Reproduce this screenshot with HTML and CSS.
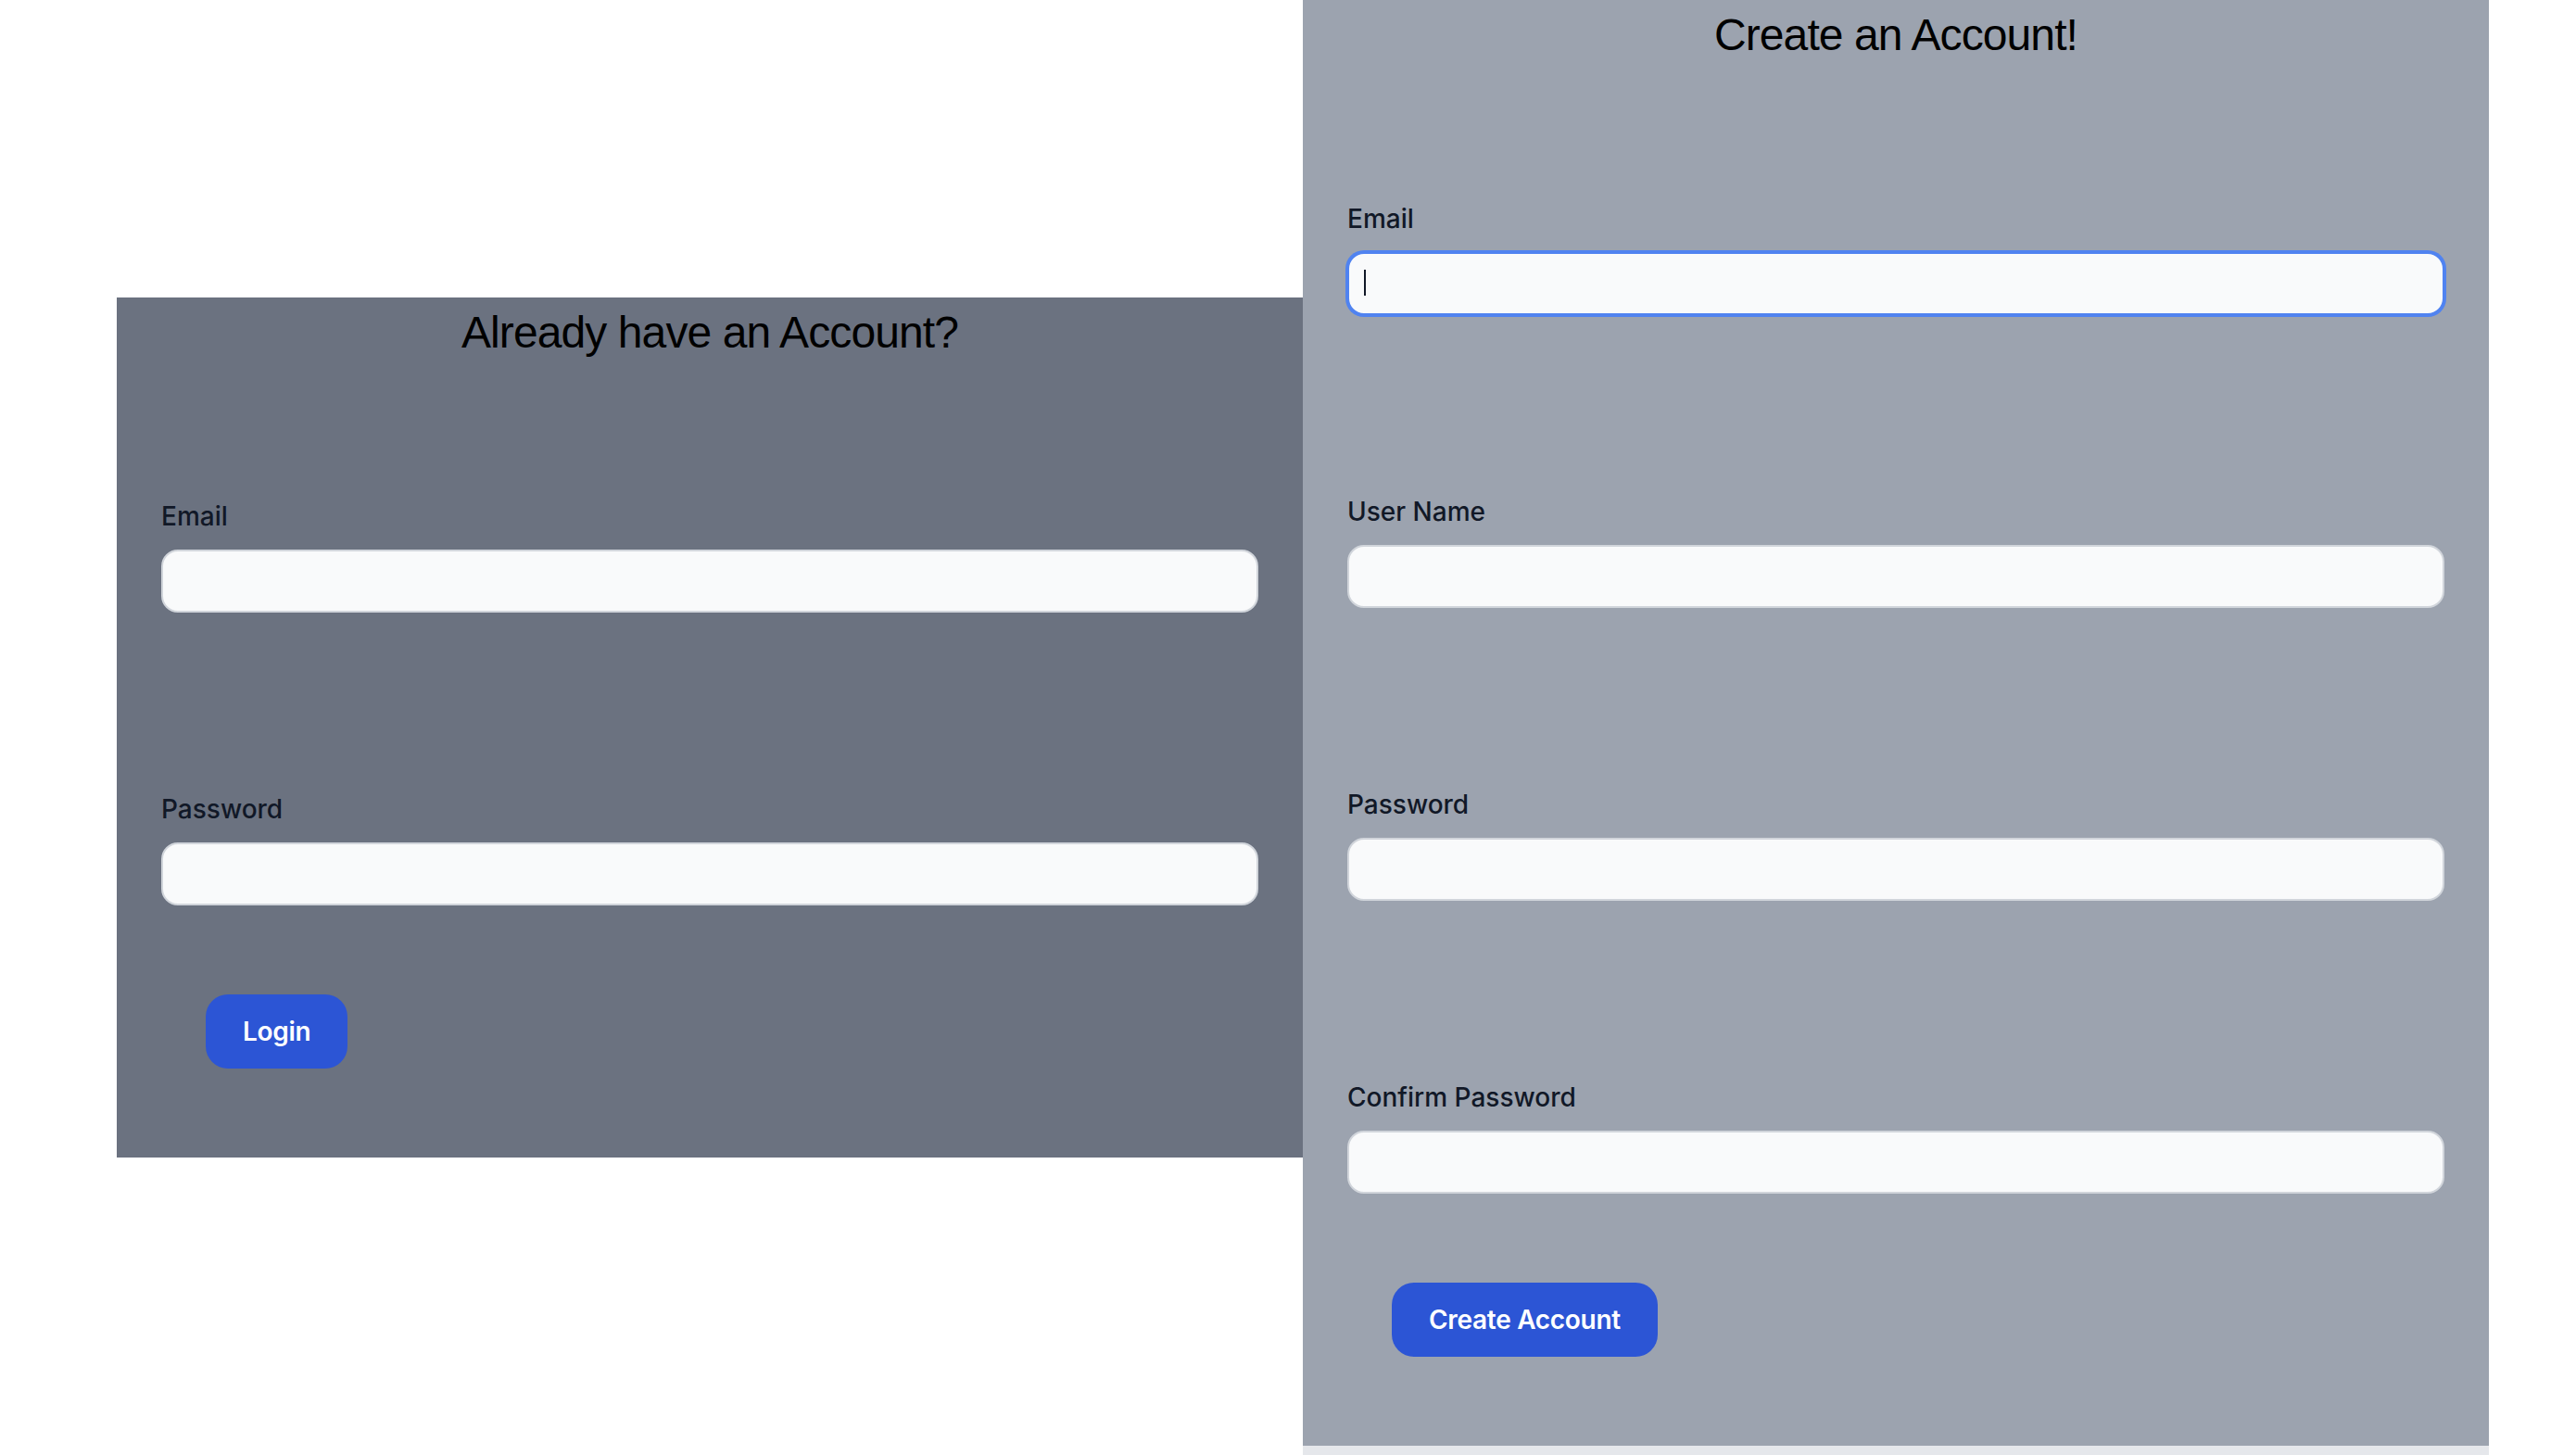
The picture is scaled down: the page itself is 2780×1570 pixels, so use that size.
FILE: index.html
```html
<!DOCTYPE html>
<html lang="en">
<head>
<meta charset="utf-8">
<title>Account</title>
<link rel="stylesheet" href="styles.css">
</head>
<body>
<main class="page">
  <section class="panel panel-login">
    <h1 class="title">Already have an Account?</h1>
    <form class="form">
      <div class="field">
        <label class="label">Email</label>
        <input class="input" type="email">
      </div>
      <div class="field">
        <label class="label">Password</label>
        <input class="input" type="password">
      </div>
      <button class="btn" type="button">Login</button>
    </form>
  </section>
  <section class="panel panel-signup">
    <h1 class="title">Create an Account!</h1>
    <form class="form">
      <div class="field">
        <label class="label">Email</label>
        <div class="input-wrap">
          <input class="input input-focus" type="email">
          <span class="caret"></span>
        </div>
      </div>
      <div class="field">
        <label class="label">User Name</label>
        <input class="input" type="text">
      </div>
      <div class="field">
        <label class="label">Password</label>
        <input class="input" type="password">
      </div>
      <div class="field">
        <label class="label">Confirm Password</label>
        <input class="input" type="password">
      </div>
      <button class="btn" type="button">Create Account</button>
    </form>
  </section>
</main>
</body>
</html>
```

FILE: styles.css
```css
* { box-sizing: border-box; }

html, body {
  margin: 0;
  padding: 0;
  background: #ffffff;
}

body {
  width: 2780px;
  height: 1570px;
  overflow: hidden;
  font-family: Inter, "Noto Sans", sans-serif;
}

.page {
  display: flex;
  align-items: center;
  height: 1570px;
  padding-left: 126px;
}

.panel {
  width: 1280px;
  padding: 0 48px;
  display: flex;
  flex-direction: column;
}

.panel-login {
  background: #6b7280;
}

.panel-signup {
  background: #9ca3af;
  align-self: flex-start;
  border-bottom: 10px solid #e5e7eb;
}

.title {
  margin: 0;
  font-family: "Liberation Sans", Arial, sans-serif;
  font-weight: 400;
  font-size: 48px;
  line-height: 76px;
  letter-spacing: -0.9px;
  color: #000000;
  text-align: center;
}

.form {
  display: flex;
  flex-direction: column;
  align-items: flex-start;
  padding-top: 140px;
  gap: 192px;
}

.field {
  width: 100%;
  display: flex;
  flex-direction: column;
}

.label {
  font-size: 28px;
  line-height: 40px;
  font-weight: 500;
  color: #111827;
  margin-bottom: 16px;
}

.input-wrap {
  position: relative;
}

.input {
  display: block;
  width: 100%;
  height: 68px;
  padding: 0 16px;
  background: #f9fafb;
  border: 2px solid #d1d5db;
  border-radius: 18px;
  font-family: Inter, sans-serif;
  font-size: 28px;
  color: #111827;
  outline: none;
}

.input-focus {
  border-color: #5083f0;
  box-shadow: 0 0 0 2px #5083f0;
}

.caret {
  position: absolute;
  left: 18px;
  top: 19px;
  width: 2px;
  height: 28px;
  background: #111827;
}

.btn {
  margin: -96px 0 96px 48px;
  height: 80px;
  padding: 0 40px;
  background: #2c55d5;
  color: #ffffff;
  border: none;
  border-radius: 24px;
  font-family: Inter, sans-serif;
  font-size: 28px;
  font-weight: 600;
  letter-spacing: -0.3px;
  line-height: 80px;
}
```
